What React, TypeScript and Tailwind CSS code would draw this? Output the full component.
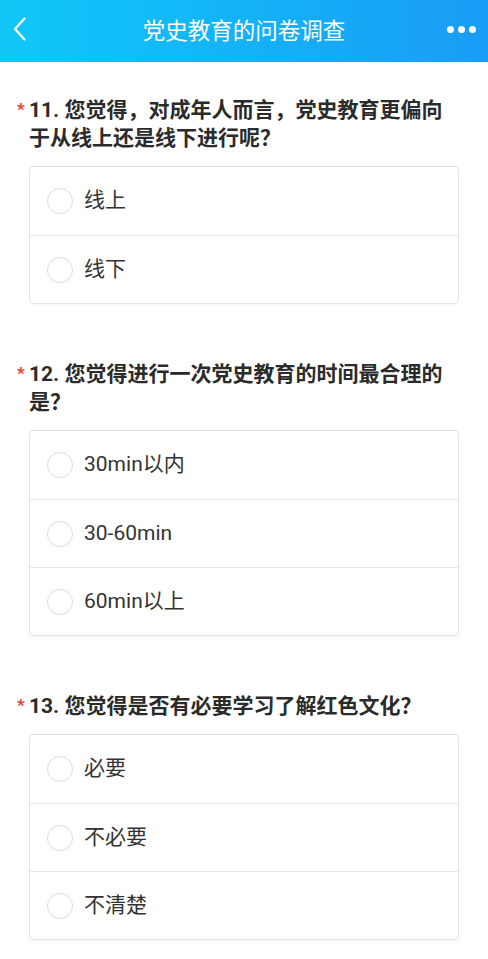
import React from 'react';

type Question = {
  no: string;
  title: string;
  options: string[];
};

const QUESTIONS: Question[] = [
  {
    no: '11.',
    title: '您觉得，对成年人而言，党史教育更偏向于从线上还是线下进行呢？',
    options: ['线上', '线下'],
  },
  {
    no: '12.',
    title: '您觉得进行一次党史教育的时间最合理的是？',
    options: ['30min以内', '30-60min', '60min以上'],
  },
  {
    no: '13.',
    title: '您觉得是否有必要学习了解红色文化？',
    options: ['必要', '不必要', '不清楚'],
  },
];

function Header() {
  return (
    <div className="relative flex h-[62px] items-center justify-center bg-gradient-to-r from-[#10c8f8] to-[#1a9cf6]">
      <svg className="absolute left-[12px] top-[17px]" width="16" height="24" viewBox="0 0 16 24" fill="none">
        <path d="M12.5 1.5L3 12l9.5 10.5" stroke="white" strokeWidth="2.2" strokeLinecap="round" strokeLinejoin="round" />
      </svg>
      <span className="text-[22.5px] leading-none text-white">党史教育的问卷调查</span>
      <div className="absolute right-[12px] top-[26px] flex gap-[4px]">
        <span className="h-[7px] w-[7px] rounded-full bg-white" />
        <span className="h-[7px] w-[7px] rounded-full bg-white" />
        <span className="h-[7px] w-[7px] rounded-full bg-white" />
      </div>
    </div>
  );
}

function QuestionBlock({ q }: { q: Question }) {
  const heading = `${q.no} ${q.title}`;
  return (
    <div className="pt-[34px] pb-[22px]">
      <div className="flex pl-[17px] pr-[28px]">
        <span className="w-[12px] shrink-0 pt-[3px] text-[17px] font-bold leading-[20px] text-[#e8393a]">*</span>
        <p className="text-[21px] font-bold leading-[28px] text-[#2b2b2b]">{heading}</p>
      </div>
      <div className="mx-[29px] mt-[14px] overflow-hidden rounded-[4px] border border-[#e3e3e3] shadow-[0_1px_2px_rgba(0,0,0,0.04)]">
        {q.options.map((opt, i) => (
          <div
            key={opt}
            className={`flex h-[68px] items-center gap-[11px] pl-[17px] ${i > 0 ? 'border-t border-[#e6e6e6]' : ''}`}
          >
            <span className="h-[26px] w-[26px] rounded-full border-[1.5px] border-[#dcdcdc]" />
            <span className="text-[21px] text-[#333333]">{opt}</span>
          </div>
        ))}
      </div>
    </div>
  );
}

export default function App() {
  return (
    <div className="min-h-[959px] bg-white font-['Roboto','Noto_Sans_CJK_SC',sans-serif]">
      <Header />
      {QUESTIONS.map((q) => (
        <QuestionBlock key={q.no} q={q} />
      ))}
    </div>
  );
}
